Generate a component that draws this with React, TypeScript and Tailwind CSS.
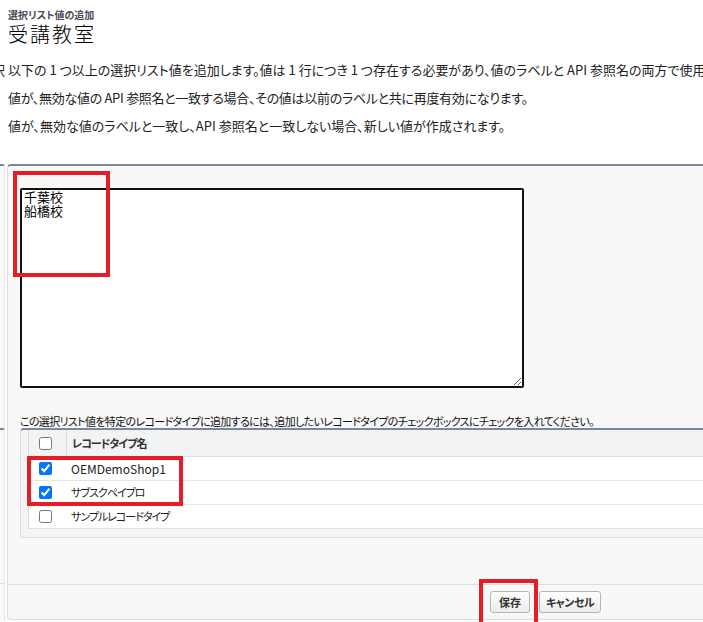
import React from "react";

function Row({ label, checked, jp }: { label: string; checked: boolean; jp?: boolean }) {
  return (
    <div className="flex h-[24px] items-center bg-white border-b border-[#e3e3e3]">
      <div className="w-[37px] pl-[10px] flex items-center">
        <input type="checkbox" defaultChecked={checked} className="w-[13px] h-[13px] m-0" />
      </div>
      <div className={jp ? "pl-[5px] text-[11px] tracking-[-1px] text-[#222]" : "pl-[5px] text-[12px] text-[#222]"}>{label}</div>
    </div>
  );
}

export default function App() {
  return (
    <div className="relative w-[703px] h-[622px] overflow-hidden bg-white text-[#222] font-['Noto_Sans_CJK_JP',sans-serif] [font-feature-settings:'palt']">
      <div className="pt-[8px] pl-[8px]">
        <div className="text-[10px] leading-[13px] font-bold text-[#4a4a56]">選択リスト値の追加</div>
        <div className="text-[20px] leading-[24px] mt-[1px] text-black font-light tracking-[2px]">受講教室</div>
      </div>

      <div className="mt-[10px] text-[13px] whitespace-nowrap">
        <div className="h-[28px] leading-[28px] pl-[8px]">
          <span className="inline-block align-top w-[16px] ml-[-16px]">択</span>以下の 1 つ以上の選択リスト値を追加します。値は 1 行につき 1 つ存在する必要があり、値のラベルと API 参照名の両方で使用されます。
        </div>
        <div className="h-[28px] leading-[28px] pl-[8px] tracking-[-0.3px]">
          値が、無効な値の API 参照名と一致する場合、その値は以前のラベルと共に再度有効になります。
        </div>
        <div className="h-[28px] leading-[28px] pl-[8px]">
          値が、無効な値のラベルと一致し、API 参照名と一致しない場合、新しい値が作成されます。
        </div>
      </div>

      <div className="mt-[24px] flex items-start">
        <div className="w-[5px] shrink-0 mr-[2px] flex flex-col bg-[#f8f8f8] border-r border-[#e6e6e6]">
          <div className="h-[2px] bg-[#7c879e]" />
          <div className="h-[262px]" />
          <div className="h-[2px] bg-[#7c879e]" />
          <div className="h-[153px]" />
          <div className="h-[1px] bg-[#dcdcdc]" />
          <div className="h-[37px]" />
        </div>

        <div className="w-[1076px] shrink-0 h-[456px] flex flex-col bg-[#f8f8f8] border-t-2 border-t-[#7c879e] border-l border-b border-l-[#dcdcdc] border-b-[#dcdcdc] rounded-[4px]">
          <div className="pl-[12px] pt-[22px]">
            <textarea
              readOnly
              defaultValue={"千葉校\n船橋校"}
              className="block w-[504px] h-[200px] border-2 border-[#111] rounded-[2px] bg-white px-[2px] py-0 text-[13px] leading-[14px] text-black outline-none resize"
            />
            <div className="mt-[26px] h-[14px] leading-[14px] text-[11px] tracking-[-0.65px] whitespace-nowrap text-[#111]">
              この選択リスト値を特定のレコードタイプに追加するには、追加したいレコードタイプのチェックボックスにチェックを入れてください。
            </div>
            <div className="bg-[#f5f5f5] border-t-2 border-t-[#7c879e] border-l border-b border-l-[#dcdcdc] border-b-[#dcdcdc] rounded-[4px] px-[7px] pb-[8px]">
              <div className="border-l border-[#dcdcdc]">
                <div className="flex h-[27px] items-center bg-[#f2f3f3] border-b border-[#e0e0e0]">
                  <div className="w-[38px] h-full pl-[10px] flex items-center border-r border-[#dcdcdc]">
                    <input type="checkbox" className="w-[13px] h-[13px] m-0" />
                  </div>
                  <div className="pl-[5px] text-[11px] tracking-[-1px] font-bold text-[#333]">レコードタイプ名</div>
                </div>
                <Row label="OEMDemoShop1" checked />
                <Row label="サブスクペイプロ" checked jp />
                <Row label="サンプルレコードタイプ" checked={false} jp />
              </div>
            </div>
          </div>
          <div className="flex-1" />
          <div className="h-[35px] border-t border-[#dcdcdc] flex justify-center gap-[9px] pt-[6px]">
            <button className="w-[40px] h-[22px] border border-[#b5b5b5] rounded-[3px] bg-gradient-to-b from-white to-[#ececec] text-[11px] font-bold text-[#333] leading-none">
              保存
            </button>
            <button className="w-[62px] h-[22px] border border-[#b5b5b5] rounded-[3px] bg-gradient-to-b from-white to-[#ececec] text-[11px] font-bold text-[#333] leading-none tracking-[-0.5px]">
              キャンセル
            </button>
          </div>
        </div>
      </div>

      <div className="absolute left-[13px] top-[171px] w-[97px] h-[106px] border-4 border-[#e81c24]" />
      <div className="absolute left-[27px] top-[456px] w-[156px] h-[50px] border-4 border-[#e81c24]" />
      <div className="absolute left-[479px] top-[579px] w-[59px] h-[48px] border-4 border-[#e81c24]" />
    </div>
  );
}
